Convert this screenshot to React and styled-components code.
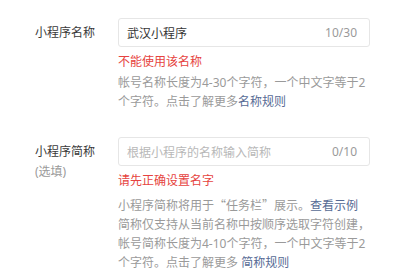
import styled, { createGlobalStyle } from "styled-components";

const GlobalStyle = createGlobalStyle`
  body {
    margin: 0;
    background: #fff;
    font-family: "Noto Sans", "Noto Sans CJK SC", sans-serif;
  }
`;

const Form = styled.div`
  padding: 18px 0 0 35px;
  display: flex;
  flex-direction: column;
  gap: 26px;
`;

const Row = styled.div`
  display: flex;
  align-items: flex-start;
`;

const Label = styled.div`
  width: 83px;
  flex-shrink: 0;
  padding-top: 5px;
  font-size: 12px;
  line-height: 20px;
  color: #3a3a3a;
`;

const Optional = styled.div`
  color: #9a9a9a;
`;

const Field = styled.div`
  width: 252px;
  display: flex;
  flex-direction: column;
`;

const InputBox = styled.div`
  height: 29px;
  box-sizing: border-box;
  border: 1px solid #e6e6e6;
  border-radius: 3px;
  display: flex;
  align-items: center;
  padding: 0 12px 0 8px;
  font-size: 12px;
`;

const Value = styled.span`
  flex: 1;
  color: ${({ $placeholder }) => ($placeholder ? "#b8b8b8" : "#353535")};
`;

const Counter = styled.span`
  color: #9a9a9a;
`;

const Error = styled.div`
  margin-top: 6px;
  font-size: 12px;
  line-height: 18px;
  color: #e64340;
`;

const Help = styled.div`
  margin-top: ${({ $gap }) => $gap}px;
  font-size: 12px;
  line-height: 19px;
  color: #9a9a9a;
  white-space: nowrap;
`;

const Quote = styled.span`
  font-family: "Noto Sans CJK SC", sans-serif;
`;

const Link = styled.a`
  color: #576b95;
  text-decoration: none;
`;

export default function App() {
  return (
    <>
      <GlobalStyle />
      <Form>
        <Row>
          <Label>小程序名称</Label>
          <Field>
            <InputBox>
              <Value>武汉小程序</Value>
              <Counter>10/30</Counter>
            </InputBox>
            <Error>不能使用该名称</Error>
            <Help $gap={2}>
              帐号名称长度为4-30个字符，一个中文字等于2
              <br />
              个字符。点击了解更多<Link>名称规则</Link>
            </Help>
          </Field>
        </Row>
        <Row>
          <Label>
            小程序简称
            <Optional>(选填)</Optional>
          </Label>
          <Field>
            <InputBox>
              <Value $placeholder>根据小程序的名称输入简称</Value>
              <Counter>0/10</Counter>
            </InputBox>
            <Error>请先正确设置名字</Error>
            <Help $gap={5}>
              小程序简称将用于<Quote>“任务栏”</Quote>展示。<Link>查看示例</Link>
              <br />
              简称仅支持从当前名称中按顺序选取字符创建，
              <br />
              帐号简称长度为4-10个字符，一个中文字等于2
              <br />
              个字符。点击了解更多 <Link>简称规则</Link>
            </Help>
          </Field>
        </Row>
      </Form>
    </>
  );
}
